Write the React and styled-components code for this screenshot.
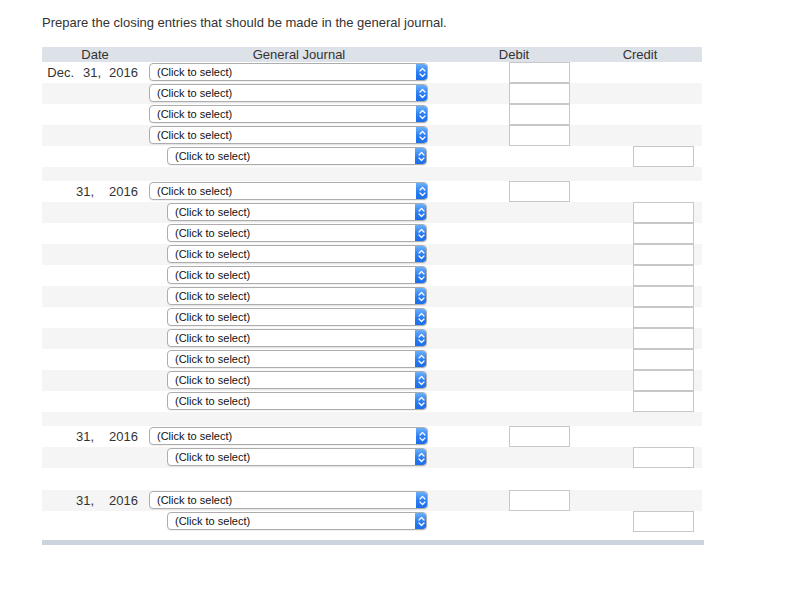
import React from 'react';
import styled, { createGlobalStyle } from 'styled-components';

const GlobalStyle = createGlobalStyle`
	html, body {
		margin: 0;
		padding: 0;
		background: #fff;
	}
	body {
		font-family: "Liberation Sans", Arial, Helvetica, sans-serif;
		color: #333;
	}
`;

// each entry: date parts, number of debit lines, then credit lines
const entries = [
	{ month: 'Dec.', day: '31,', year: '2016', debits: 4, credits: 1 },
	{ day: '31,', year: '2016', debits: 1, credits: 10 },
	{ day: '31,', year: '2016', debits: 1, credits: 1 },
	{ day: '31,', year: '2016', debits: 1, credits: 1 },
];

const spacerHeights = [14, 14, 22];

const ChevronIcon = () => (
	<svg width="7" height="11" viewBox="0 0 7 11" fill="none">
		<path d="M1 4 L3.5 1.5 L6 4" stroke="#fff" strokeWidth="1.2" strokeLinecap="round" strokeLinejoin="round" />
		<path d="M1 7 L3.5 9.5 L6 7" stroke="#fff" strokeWidth="1.2" strokeLinecap="round" strokeLinejoin="round" />
	</svg>
);

const SelectBox = ({ indent }) => (
	<Select $indent={indent}>
		<SelectText>(Click to select)</SelectText>
		<ArrowButton>
			<ChevronIcon />
		</ArrowButton>
	</Select>
);

const App = () => {
	const rows = [];
	entries.forEach((entry, i) => {
		const lines = [
			...Array(entry.debits).fill(false),
			...Array(entry.credits).fill(true),
		];
		lines.forEach((isCredit, j) => {
			rows.push(
				<Row key={`${i}-${j}`}>
					<DateCell>
						{j === 0 && (
							<>
								{entry.month && <Month>{entry.month}</Month>}
								<Day $wide={!entry.month}>{entry.day}</Day>
								<span>{entry.year}</span>
							</>
						)}
					</DateCell>
					<JournalCell $indent={isCredit}>
						<SelectBox indent={isCredit} />
					</JournalCell>
					<DebitCell>{!isCredit && <AmountInput />}</DebitCell>
					<CreditCell>{isCredit && <AmountInput />}</CreditCell>
				</Row>
			);
		});
		if (i < spacerHeights.length) {
			rows.push(
				<SpacerRow key={`s-${i}`} $height={spacerHeights[i]}>
					<td colSpan={4} />
				</SpacerRow>
			);
		}
	});

	return (
		<Page>
			<GlobalStyle />
			<Prompt>Prepare the closing entries that should be made in the general journal.</Prompt>
			<Journal>
				<colgroup>
					<col style={{ width: 106 }} />
					<col style={{ width: 302 }} />
					<col style={{ width: 128 }} />
					<col style={{ width: 124 }} />
				</colgroup>
				<thead>
					<HeaderRow>
						<HeaderCell>Date</HeaderCell>
						<HeaderCell>General Journal</HeaderCell>
						<HeaderCell>Debit</HeaderCell>
						<HeaderCell>Credit</HeaderCell>
					</HeaderRow>
				</thead>
				<Body>{rows}</Body>
			</Journal>
			<FooterBar />
		</Page>
	);
};

const Page = styled.div`
	padding: 15px 0 0 42px;
`;

const Prompt = styled.p`
	margin: 0 0 16px;
	font-size: 13px;
	line-height: 16px;
	color: #333;
`;

const Journal = styled.table`
	border-collapse: collapse;
	table-layout: fixed;
	width: 660px;
`;

const HeaderRow = styled.tr`
	background: #dde1e8;
	height: 15px;
`;

const HeaderCell = styled.th`
	padding: 0;
	font-weight: normal;
	font-size: 13px;
	line-height: 15px;
	color: #333;
	text-align: center;
`;

const Body = styled.tbody`
	& > tr:nth-child(even) {
		background: #f5f5f5;
	}
`;

const Row = styled.tr`
	height: 21px;
`;

const SpacerRow = styled.tr`
	height: ${(p) => p.$height}px;
	td {
		padding: 0;
	}
`;

const DateCell = styled.td`
	padding: 0 10px 0 0;
	text-align: right;
	font-size: 13px;
	line-height: 21px;
	color: #333;
	vertical-align: middle;
	white-space: nowrap;
`;

const Month = styled.span`
	margin-right: 9px;
`;

const Day = styled.span`
	margin-right: ${(p) => (p.$wide ? 15 : 8)}px;
`;

const JournalCell = styled.td`
	padding: 1px 0 2px ${(p) => (p.$indent ? 19 : 1)}px;
	vertical-align: top;
`;

const Select = styled.div`
	display: flex;
	align-items: center;
	box-sizing: border-box;
	width: ${(p) => (p.$indent ? 260 : 279)}px;
	height: 18px;
	border: 1px solid #adadad;
	border-radius: 4px;
	background: #fff;
	box-shadow: 0 1px 0 rgba(0, 0, 0, 0.06);
	overflow: hidden;
`;

const SelectText = styled.span`
	flex: 1;
	padding-left: 7px;
	font-size: 11px;
	line-height: 16px;
	color: #111;
	white-space: nowrap;
`;

const ArrowButton = styled.span`
	display: flex;
	align-items: center;
	justify-content: center;
	width: 12px;
	height: 16px;
	margin-right: -1px;
	border-radius: 0 4px 4px 0;
	background: linear-gradient(#6bb0fb, #2a7df2 55%, #1a6ee9);
`;

const DebitCell = styled.td`
	padding: 0 0 0 59px;
	vertical-align: top;
`;

const CreditCell = styled.td`
	padding: 0 0 0 55px;
	vertical-align: top;
`;

const AmountInput = styled.input.attrs({ type: 'text' })`
	display: block;
	box-sizing: border-box;
	width: 61px;
	height: 21px;
	margin: 0;
	padding: 0 3px;
	border: 1px solid #c8c8c8;
	background: #fff;
	outline: none;
`;

const FooterBar = styled.div`
	width: 662px;
	height: 5px;
	margin-top: 8px;
	background: #ccd3df;
`;

export default App;
